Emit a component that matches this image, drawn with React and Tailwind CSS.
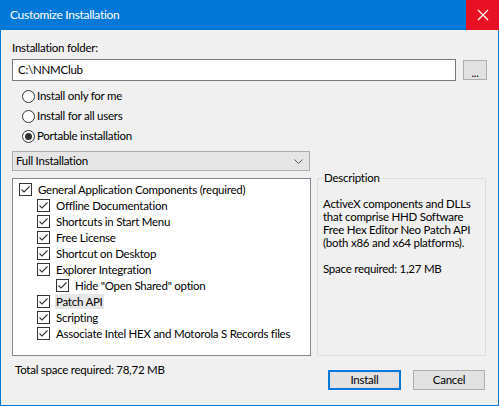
import React from "react"

const font = { fontFamily: 'Lato, "Liberation Sans", sans-serif' }

const Check = () => (
    <svg width="13" height="13" viewBox="0 0 13 13" className="shrink-0">
        <rect x="0.5" y="0.5" width="12" height="12" fill="#fff" stroke="#333" />
        <path d="M2.5 6.5 L5 9 L10.5 3.5" fill="none" stroke="#333" strokeWidth="1.1" />
    </svg>
)

const Radio = ({ on }) => (
    <svg width="13" height="13" viewBox="0 0 13 13" className="shrink-0">
        <circle cx="6.5" cy="6.5" r="6" fill="#fff" stroke="#333" />
        {on && <circle cx="6.5" cy="6.5" r="3.5" fill="#333" />}
    </svg>
)

const items = [
    { label: "General Application Components (required)", level: 0 },
    { label: "Offline Documentation", level: 1 },
    { label: "Shortcuts in Start Menu", level: 1 },
    { label: "Free License", level: 1 },
    { label: "Shortcut on Desktop", level: 1 },
    { label: "Explorer Integration", level: 1 },
    { label: 'Hide "Open Shared" option', level: 2 },
    { label: "Patch API", level: 1, selected: true },
    { label: "Scripting", level: 1 },
    { label: "Associate Intel HEX and Motorola S Records files", level: 1 },
]

const pad = ["pl-[6px]", "pl-[24px]", "pl-[43px]"]

export default function App() {
    return (
        <div style={font} className="w-[499px] h-[406px] bg-[#0078d7] flex flex-col px-px pb-px text-[11.5px] tracking-[-0.25px] text-black whitespace-nowrap">
            <div className="h-[30px] flex items-center justify-between shrink-0">
                <span className="pl-[9px] text-white text-[12px] tracking-[-0.3px]">Customize Installation</span>
                <div className="w-[33px] h-[30px] -mr-px bg-[#e81123] flex items-center justify-center">
                    <svg width="12" height="12" viewBox="0 0 12 12">
                        <path d="M1 1 L11 11 M11 1 L1 11" stroke="#fff" strokeWidth="1.2" />
                    </svg>
                </div>
            </div>
            <div className="flex-1 bg-[#f0f0f0] flex flex-col pl-[11px] pr-[11px]">
                <div className="mt-[10px] h-[16px] leading-[16px]">Installation folder:</div>
                <div className="mt-[3px] flex items-center">
                    <div className="w-[444px] h-[22px] border border-[#7a7a7a] bg-white flex items-center pl-[5px]">C:\NNMClub</div>
                    <div className="ml-[7px] w-[24px] h-[20px] border border-[#adadad] bg-[#e1e1e1] flex items-center justify-center text-[11px] leading-none pt-[4px]">...</div>
                </div>
                <div className="mt-[5px] flex flex-col pl-[10px]">
                    {[["Install only for me", false], ["Install for all users", false], ["Portable installation", true]].map(([t, on]) => (
                        <div key={t} className="h-[20px] flex items-center gap-[2px]">
                            <Radio on={on} />
                            <span>{t}</span>
                        </div>
                    ))}
                </div>
                <div className="mt-[5px] w-[298px] h-[20px] border border-[#acacac] bg-[#e5e5e5] flex items-center justify-between pl-[3px] pr-[6px]">
                    <span>Full Installation</span>
                    <svg width="9" height="5" viewBox="0 0 9 5">
                        <path d="M0.5 0.5 L4.5 4.5 L8.5 0.5" fill="none" stroke="#555" />
                    </svg>
                </div>
                <div className="mt-[7px] flex gap-[6px] h-[178px]">
                    <div className="w-[299px] h-full border border-[#828790] bg-white flex flex-col pt-[2px]">
                        {items.map((it) => (
                            <div key={it.label} className={"h-[16px] flex items-center " + pad[it.level]}>
                                <Check />
                                <span className={"ml-[5px] px-[1px] leading-[15px] " + (it.selected ? "bg-[#e6e6e6]" : "")}>{it.label}</span>
                            </div>
                        ))}
                    </div>
                    <div className="relative w-[169px] h-full">
                        <div className="absolute inset-0 border border-[#dcdcdc] rounded-[1px]" />
                        <span className="absolute left-[6px] -top-[8px] px-[1px] bg-[#f0f0f0] leading-[16px]">Description</span>
                        <div className="relative pt-[19px] pl-[6px] leading-[13px]">
                            <div>ActiveX components and DLLs</div>
                            <div>that comprise HHD Software</div>
                            <div>Free Hex Editor Neo Patch API</div>
                            <div>(both x86 and x64 platforms).</div>
                            <div className="mt-[13px]">Space required: 1,27 MB</div>
                        </div>
                    </div>
                </div>
                <div className="mt-[6px] flex items-start">
                    <span className="pl-[3px] flex-1 leading-[16px]">Total space required: 78,72 MB</span>
                    <div className="mt-[8px] w-[73px] h-[20px] border-2 border-[#0078d7] bg-[#e1e1e1] flex items-center justify-center">Install</div>
                    <div className="mt-[8px] ml-[12px] mr-[2px] w-[72px] h-[20px] border border-[#adadad] bg-[#e1e1e1] flex items-center justify-center">Cancel</div>
                </div>
            </div>
        </div>
    )
}
